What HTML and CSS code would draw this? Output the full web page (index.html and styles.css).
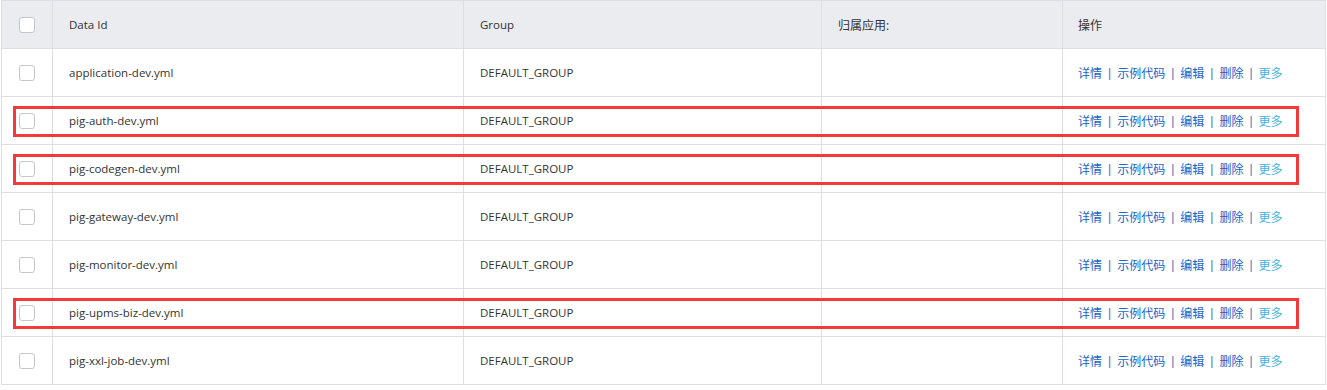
FILE: index.html
```html
<!DOCTYPE html>
<html lang="zh">
<head>
<meta charset="utf-8">
<title>配置列表</title>
<link rel="stylesheet" href="styles.css">
</head>
<body>
<div class="page">
  <div class="table">
    <div class="row head">
      <div class="cell sel"><span class="cb"></span></div>
      <div class="cell">Data Id</div>
      <div class="cell">Group</div>
      <div class="cell cjk">归属应用:</div>
      <div class="cell last cjk">操作</div>
    </div>
    <div class="row">
      <div class="cell sel"><span class="cb"></span></div>
      <div class="cell">application-dev.yml</div>
      <div class="cell">DEFAULT_GROUP</div>
      <div class="cell"></div>
      <div class="cell last ops"><a>详情</a><span class="sep">|</span><a>示例代码</a><span class="sep">|</span><a>编辑</a><span class="sep">|</span><a>删除</a><span class="sep">|</span><a class="more">更多</a></div>
    </div>
    <div class="row">
      <div class="cell sel"><span class="cb"></span></div>
      <div class="cell">pig-auth-dev.yml</div>
      <div class="cell">DEFAULT_GROUP</div>
      <div class="cell"></div>
      <div class="cell last ops"><a>详情</a><span class="sep">|</span><a>示例代码</a><span class="sep">|</span><a>编辑</a><span class="sep">|</span><a>删除</a><span class="sep">|</span><a class="more">更多</a></div>
    </div>
    <div class="row">
      <div class="cell sel"><span class="cb"></span></div>
      <div class="cell">pig-codegen-dev.yml</div>
      <div class="cell">DEFAULT_GROUP</div>
      <div class="cell"></div>
      <div class="cell last ops"><a>详情</a><span class="sep">|</span><a>示例代码</a><span class="sep">|</span><a>编辑</a><span class="sep">|</span><a>删除</a><span class="sep">|</span><a class="more">更多</a></div>
    </div>
    <div class="row">
      <div class="cell sel"><span class="cb"></span></div>
      <div class="cell">pig-gateway-dev.yml</div>
      <div class="cell">DEFAULT_GROUP</div>
      <div class="cell"></div>
      <div class="cell last ops"><a>详情</a><span class="sep">|</span><a>示例代码</a><span class="sep">|</span><a>编辑</a><span class="sep">|</span><a>删除</a><span class="sep">|</span><a class="more">更多</a></div>
    </div>
    <div class="row">
      <div class="cell sel"><span class="cb"></span></div>
      <div class="cell">pig-monitor-dev.yml</div>
      <div class="cell">DEFAULT_GROUP</div>
      <div class="cell"></div>
      <div class="cell last ops"><a>详情</a><span class="sep">|</span><a>示例代码</a><span class="sep">|</span><a>编辑</a><span class="sep">|</span><a>删除</a><span class="sep">|</span><a class="more">更多</a></div>
    </div>
    <div class="row">
      <div class="cell sel"><span class="cb"></span></div>
      <div class="cell">pig-upms-biz-dev.yml</div>
      <div class="cell">DEFAULT_GROUP</div>
      <div class="cell"></div>
      <div class="cell last ops"><a>详情</a><span class="sep">|</span><a>示例代码</a><span class="sep">|</span><a>编辑</a><span class="sep">|</span><a>删除</a><span class="sep">|</span><a class="more">更多</a></div>
    </div>
    <div class="row">
      <div class="cell sel"><span class="cb"></span></div>
      <div class="cell">pig-xxl-job-dev.yml</div>
      <div class="cell">DEFAULT_GROUP</div>
      <div class="cell"></div>
      <div class="cell last ops"><a>详情</a><span class="sep">|</span><a>示例代码</a><span class="sep">|</span><a>编辑</a><span class="sep">|</span><a>删除</a><span class="sep">|</span><a class="more">更多</a></div>
    </div>
  </div>
  <div class="mark mark-1"></div>
  <div class="mark mark-2"></div>
  <div class="mark mark-3"></div>
</div>
</body>
</html>
```
FILE: styles.css
```css
html, body {
  margin: 0;
  padding: 0;
  background: #fff;
}
.page {
  position: relative;
  width: 1327px;
  height: 390px;
  font-family: "Open Sans", "Noto Sans CJK SC", sans-serif;
  font-size: 11.5px;
  color: #333;
}
.table {
  margin-left: 1px;
  width: 1325px;
  border-top: 1px solid #dcdee3;
  border-left: 1px solid #dcdee3;
  box-sizing: border-box;
}
.row {
  display: grid;
  grid-template-columns: 51px 411px 358px 241px 1fr;
  height: 48px;
  border-bottom: 1px solid #dcdee3;
  box-sizing: border-box;
}
.row.head {
  height: 48px;
  background: #ebecf0;
}
.cell {
  display: flex;
  align-items: center;
  padding-left: 16px;
  border-right: 1px solid #dcdee3;
  white-space: nowrap;
}
.cell.cjk {
  font-size: 12px;
}
.cell.sel {
  padding-left: 17px;
}
.cell.last {
  padding-left: 15px;
}
.cb {
  display: block;
  width: 16px;
  height: 16px;
  box-sizing: border-box;
  border: 1px solid #c4c6cf;
  border-radius: 3px;
  background: #fff;
}
.ops {
  font-family: "Noto Sans CJK SC", sans-serif;
  font-size: 12px;
}
.ops a {
  color: #2262c9;
}
.ops a.more {
  color: #45b2e2;
}
.sep {
  margin: 0 6px;
  color: #4a72b6;
  font-family: "Liberation Sans", sans-serif;
}
.mark {
  position: absolute;
  left: 13px;
  width: 1286px;
  height: 31px;
  border: 3px solid #f23a3a;
  box-sizing: border-box;
}
.mark-1 { top: 106px; }
.mark-2 { top: 154px; }
.mark-3 { top: 298px; }
```
